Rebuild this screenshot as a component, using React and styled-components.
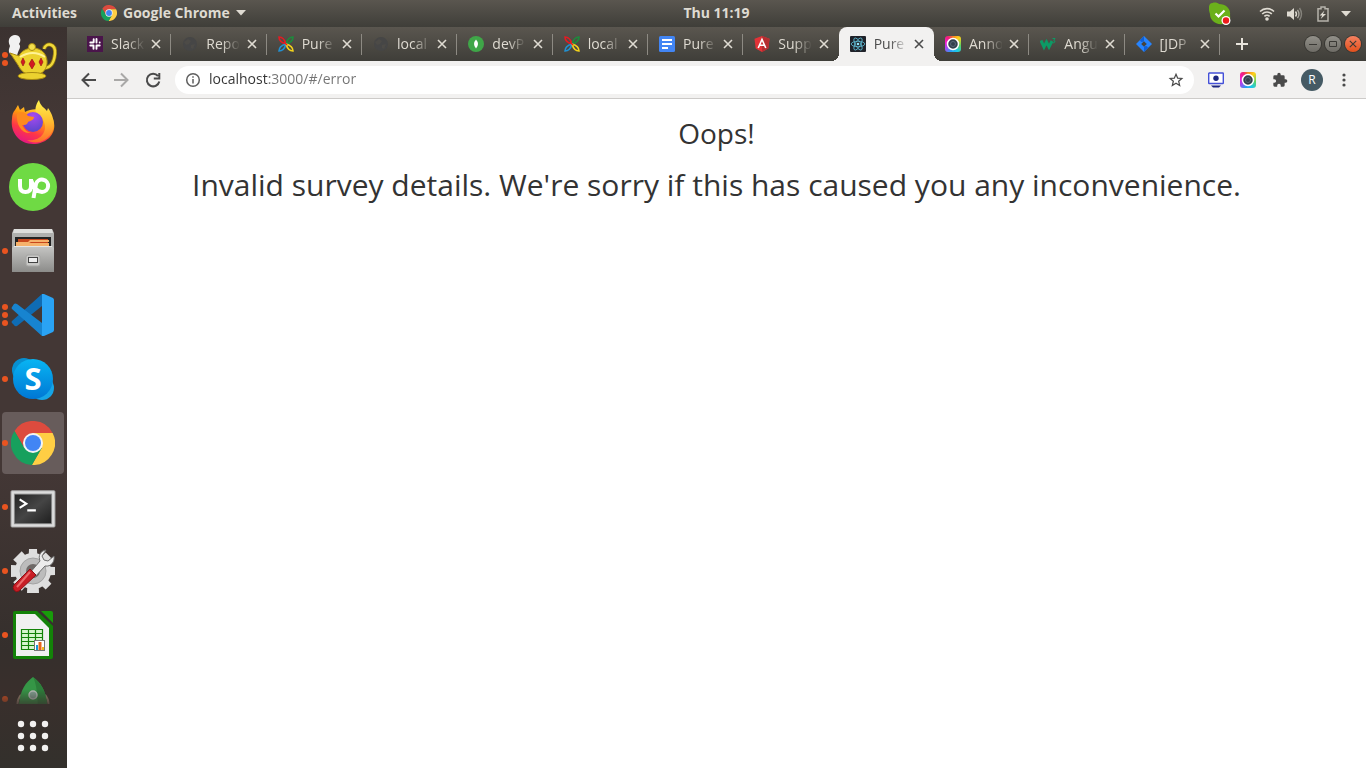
import React from "react";
import styled, { createGlobalStyle } from "styled-components";

const chromeGradient = "linear-gradient(#5a564f, #3f3e39)";

const GlobalStyle = createGlobalStyle`
  * { box-sizing: border-box; }
  body {
    margin: 0;
    background: #fff;
    font-family: "Open Sans", "Noto Sans", sans-serif;
  }
  button {
    border: 0;
    padding: 0;
    background: none;
    font: inherit;
    color: inherit;
  }
  svg { display: block; flex: none; }
`;

/* ---------- layout ---------- */

const Desktop = styled.div`
  display: flex;
  flex-direction: column;
  height: 100vh;
  overflow: hidden;
`;

const TopBar = styled.header`
  display: grid;
  grid-template-columns: 1fr auto 1fr;
  align-items: center;
  height: 27px;
  flex: none;
  background: ${chromeGradient};
  color: #dfdbd2;
  font-size: 14px;
  font-weight: 700;
  line-height: 24px;
`;

const TopLeft = styled.div`
  display: flex;
  align-items: center;
  gap: 24px;
  padding-left: 12px;
`;

const BarButton = styled.button`
  display: flex;
  align-items: center;
  gap: 6px;
  padding-bottom: 2px;
  white-space: nowrap;
`;

const Clock = styled.button`
  padding: 0 0 2px 67px;
`;

const Tray = styled.div`
  display: flex;
  align-items: center;
  justify-content: flex-end;
  gap: 12px;
  padding-right: 15px;
`;

const TrayStatus = styled.div`
  margin-right: 16px;
`;

const Workspace = styled.div`
  display: flex;
  flex: 1;
  min-height: 0;
`;

const Browser = styled.div`
  display: flex;
  flex-direction: column;
  flex: 1;
  min-width: 0;
`;

/* ---------- dock ---------- */

const Dock = styled.nav`
  display: flex;
  flex-direction: column;
  width: 67px;
  flex: none;
  background: linear-gradient(#3b3230, #433735 12%, #433735 60%, #352f2c 84%, #392f2c 90%, #33302c);
`;

const DockSlot = styled.div`
  position: relative;
  display: flex;
  justify-content: center;
  height: 64px;
  flex: none;
  padding: 1px 3px 1px 2px;
  ${(p) => p.$clipped && `
    height: auto;
    flex: 1 1 0;
    min-height: 0;
    overflow: hidden;
    opacity: .85;
    mask-image: linear-gradient(#000 60%, rgba(0, 0, 0, .3));
  `}
`;

const DockButton = styled.button`
  display: flex;
  align-items: center;
  justify-content: center;
  width: 62px;
  height: 62px;
  border-radius: 4px;
  background: ${(p) => (p.$active ? "#675c5b" : "none")};
`;

const Dots = styled.span`
  position: absolute;
  left: 2px;
  top: 0;
  height: 64px;
  display: flex;
  flex-direction: column;
  justify-content: center;
  gap: 2px;
`;

const Dot = styled.i`
  width: 6px;
  height: 6px;
  border-radius: 3px;
  background: #e95420;
`;

/* ---------- tab strip ---------- */

const TabStrip = styled.div`
  display: flex;
  height: 34px;
  flex: none;
  padding-left: 9px;
  background: ${chromeGradient};
`;

const Tabs = styled.div`
  display: flex;
  flex: 1;
  min-width: 0;
`;

const Tab = styled.div`
  position: relative;
  display: flex;
  align-items: center;
  flex: 1 1 0;
  min-width: 0;
  padding: 0 7px 0 11px;
  color: ${(p) => (p.$active ? "#4c4c4c" : "#dfdbd2")};
  ${(p) => p.$active && `
    background: #f2f1f0;
    border-radius: 8px 8px 0 0;
    &::before, &::after {
      content: "";
      position: absolute;
      bottom: 0;
      width: 8px;
      height: 8px;
    }
    &::before {
      right: 100%;
      background: radial-gradient(circle at 0 0, transparent 8px, #f2f1f0 8px);
    }
    &::after {
      left: 100%;
      background: radial-gradient(circle at 100% 0, transparent 8px, #f2f1f0 8px);
    }
  `}
  ${(p) => p.$divider && `
    &::after {
      content: "";
      position: absolute;
      right: 0;
      top: 7px;
      width: 1px;
      height: 21px;
      background: #8d8a83;
    }
  `}
`;

const TabLabel = styled.button`
  display: flex;
  align-items: center;
  gap: 8px;
  flex: 1;
  min-width: 0;
  text-align: left;
`;

const TabTitle = styled.span`
  flex: 1;
  min-width: 0;
  overflow: hidden;
  white-space: nowrap;
  font-size: 14px;
  line-height: 20px;
  mask-image: linear-gradient(90deg, #000 16px, transparent 34px);
`;

const TabClose = styled.button`
  display: grid;
  place-items: center;
  width: 16px;
  height: 16px;
  margin-left: 4px;
  flex: none;
`;

const StripEnd = styled.div`
  display: flex;
  align-items: center;
  justify-content: space-between;
  width: 146px;
  flex: none;
  padding: 0 5px 0 15px;
  color: #e8e4dc;
`;

const WindowControls = styled.div`
  display: flex;
  gap: 4px;
`;

const WindowButton = styled.button`
  display: grid;
  place-items: center;
  width: 16px;
  height: 16px;
  border-radius: 8px;
  color: #3a3935;
  background: ${(p) => (p.$close ? "linear-gradient(#f58160, #e2501c)" : "linear-gradient(#929089, #6e6c66)")};
  box-shadow: 0 0 0 1px #383733;
`;

/* ---------- toolbar ---------- */

const Toolbar = styled.div`
  display: flex;
  align-items: center;
  height: 38px;
  flex: none;
  padding: 0 6px;
  background: #f2f1f0;
  border-bottom: 1px solid #cdcbc9;
  color: #4a4a4a;
`;

const ToolButton = styled.button`
  display: grid;
  place-items: center;
  width: 32px;
  height: 28px;
  flex: none;
  color: ${(p) => (p.$disabled ? "#a9a8a7" : "inherit")};
`;

const Omnibox = styled.label`
  display: flex;
  align-items: center;
  flex: 1;
  min-width: 0;
  height: 28px;
  margin: 0 6px;
  padding: 0 2px 0 10px;
  gap: 8px;
  border-radius: 14px;
  background: #fff;
`;

const Address = styled.input`
  flex: 1;
  min-width: 0;
  height: 28px;
  border: 0;
  padding: 0 0 2px;
  outline: 0;
  font: 14px "Open Sans", "Noto Sans", sans-serif;
  color: transparent;
  caret-color: #333;
  background: linear-gradient(90deg, #333 60px, #737373 60px);
  background-clip: text;
`;

const Avatar = styled.span`
  width: 22px;
  height: 22px;
  border-radius: 11px;
  background: #455a64;
  color: #fff;
  font-size: 12px;
  line-height: 22px;
  text-align: center;
`;

/* ---------- page ---------- */

const Page = styled.main`
  flex: 1;
  padding-top: 13px;
  background: #fff;
  color: #333;
  text-align: center;
`;

const Title = styled.h1`
  margin: 0 0 10px;
  font-size: 28px;
  font-weight: 400;
  line-height: 42px;
`;

const Message = styled.p`
  margin: 0;
  font-size: 30px;
  line-height: 42px;
`;

/* ---------- drawings ---------- */

const ChromeLogo = ({ size }) => (
  <svg width={size} height={size} viewBox="2 2 44 44">
    <path d="M5.5 12A22 22 0 0 1 43.6 14H24l-8.7 15z" fill="#dd4b3e" />
    <path d="M43.6 14A22 22 0 0 1 22.9 46l9.8-17L24 14z" fill="#ffce44" />
    <path d="M22.9 46A22 22 0 0 1 5.5 12l9.8 17h17.4z" fill="#17a05d" />
    <circle cx="24" cy="24" r="10" fill="#f4f4f4" />
    <circle cx="24" cy="24" r="8" fill="#4285f4" />
  </svg>
);

const Caret = () => (
  <svg width="10" height="6" viewBox="0 0 10 6"><path d="M0 0h10L5 5.5z" fill="#dfdbd2" /></svg>
);

const SkypeStatus = () => (
  <svg width="22" height="24" viewBox="0 0 22 24">
    <path d="M1 2C4 0 8 0 10 2c7 0 12 5 11 11 1 6-2 9-7 9-8 1-13-4-13-10C0 9-1 5 1 2z" fill="#6bb01b" />
    <path d="M6.500 11.500l3 3 6-6" fill="none" stroke="#fff" strokeWidth="2.200" />
    <circle cx="17" cy="18.500" r="4.500" fill="#fff" />
    <circle cx="17" cy="18.500" r="3.200" fill="#ee1c1c" />
  </svg>
);

const Wifi = () => (
  <svg width="16" height="16" viewBox="0 0 16 16" fill="none" stroke="#dfdbd2" strokeWidth="1.600">
    <path d="M1 5.500a10 10 0 0 1 14 0M3.200 8a6.800 6.800 0 0 1 9.600 0M5.400 10.400a3.700 3.700 0 0 1 5.200 0" />
    <circle cx="8" cy="13" r="1.800" fill="#dfdbd2" stroke="none" />
  </svg>
);

const Volume = () => (
  <svg width="16" height="16" viewBox="0 0 16 16" fill="none" strokeWidth="1.400">
    <path d="M0 5.500h3L7 2v12l-4-3.500H0z" fill="#dfdbd2" />
    <path d="M8.500 5.500q2 2.500 0 5" stroke="#dfdbd2" />
    <path d="M10.500 3.800q3 4.200 0 8.400" stroke="#aaa79f" />
    <path d="M12.500 2q4 6 0 12" stroke="#85837c" />
  </svg>
);

const Battery = () => (
  <svg width="14" height="16" viewBox="0 0 14 16">
    <path d="M6 1h4v1.700h3V15H3V2.700h3z" fill="none" stroke="#b5b2aa" strokeWidth="1.500" />
    <path d="M9.500 4.500L4.700 9.500h2.500L5.700 13l5.300-5H8z" fill="#dfdbd2" />
  </svg>
);

const TeapotIcon = () => (
  <svg width="52" height="50" viewBox="0 0 52 50">
    <path d="M6 22C0 19 2 15 3 12 0 6 3 1 8 1c5 0 7 5 4 9 3 3-1 6-2 12z" fill="#f1f1f1" />
    <path d="M37 15c2-7 12-6 11 5-1 9-5 14-11 14" fill="none" stroke="#8d7410" strokeWidth="4" />
    <path d="M37 15c2-7 12-6 11 5-1 9-5 14-11 14" fill="none" stroke="#f1d93a" strokeWidth="2.500" />
    <path d="M3 19l9 3c2-5 8-8 14-8 10 0 15 8 14 16-1 7-6 11-14 11S14 37 11 31z" fill="#ecd22f" stroke="#a98b12" />
    <path d="M13 23q13-8 25 0" stroke="#fff396" strokeWidth="2" fill="none" />
    <circle cx="25" cy="13" r="3.500" fill="#f4df4c" stroke="#a98b12" />
    <ellipse cx="25" cy="42" rx="14" ry="3.500" fill="#ecd22f" stroke="#a98b12" />
    <path d="M16 24l2 4-2 4-2-4zM25 25l3 5-3 5-3-5zM34 24l2 4-2 4-2-4z" fill="#d21a22" stroke="#8f1015" strokeWidth=".6" />
  </svg>
);

const FirefoxIcon = () => (
  <svg width="48" height="48" viewBox="0 1 48 48">
    <defs>
      <linearGradient id="ffBody" x1=".8" y1="0" x2=".3" y2="1">
        <stop offset="0" stopColor="#fff44f" /><stop offset=".4" stopColor="#ff980e" />
        <stop offset=".7" stopColor="#ff3647" /><stop offset="1" stopColor="#e31587" />
      </linearGradient>
      <linearGradient id="ffTail" x1="0" y1="0" x2="0" y2="1">
        <stop offset="0" stopColor="#fff44f" /><stop offset=".5" stopColor="#ffbd2f" /><stop offset="1" stopColor="#ff6b2c" />
      </linearGradient>
      <radialGradient id="ffGlobe" cx=".5" cy=".2" r=".9">
        <stop offset="0" stopColor="#a84af0" /><stop offset="1" stopColor="#5245c8" />
      </radialGradient>
    </defs>
    <path d="M6 12l3-5 2 5 4-3 1 5c9-5 22-3 28 7 5 13-5 25-20 25C10 46 1 34 3 21c0-4 1-7 3-9z" fill="url(#ffBody)" />
    <path d="M30 2c1 6 6 8 8 11l1-3c8 11 8 24-2 31-7 5-15 4-19 1 13 2 21-8 17-18-1-4-4-6-7-8-3-4-1-10 2-14z" fill="url(#ffTail)" />
    <circle cx="24" cy="24" r="10" fill="url(#ffGlobe)" />
    <path d="M8 16c5-4 9-1 11 2l6 1c0 3-4 4-6 5-1 3-3 3-6 3 2 4 5 7 9 8C12 36 7 26 8 16z" fill="#ff8a1e" />
  </svg>
);

const UpworkIcon = () => (
  <svg width="48" height="48" viewBox="0 0 48 48" fill="none" stroke="#fff" strokeWidth="4">
    <circle cx="24" cy="24" r="24" fill="#6fda44" stroke="none" />
    <path d="M11 16v7q0 6 5.500 6t5.500-6v-7M22 17c2 6 6 12 11 12a6.200 6.200 0 1 0-6-8L24.500 35" />
  </svg>
);

const FilesIcon = () => (
  <svg width="46" height="48" viewBox="0 0 46 48">
    <defs><linearGradient id="cab" x1="0" y1="0" x2="0" y2="1"><stop offset="0" stopColor="#c6c6c4" /><stop offset="1" stopColor="#8c8c8a" /></linearGradient></defs>
    <path d="M4 2h38l2 4v38H2V6z" fill="#b0b0ae" />
    <path d="M4 2h38l1 4H3z" fill="#dededc" />
    <path d="M5 10h36v10H5z" fill="#232323" />
    <path d="M8 12h30v8H8z" fill="#c8471c" />
    <path d="M6 15h12l2-2h19v2H21l-2 1h20v3H6z" fill="#f6b26b" />
    <path d="M4 19h38l2 2v24H2V21z" fill="url(#cab)" />
    <path d="M4 19.500h38" stroke="#e6e6e4" />
    <rect x="16" y="28" width="14" height="11" rx="2" fill="#c9c9c7" stroke="#a5a5a3" />
    <rect x="18.500" y="30.500" width="9" height="5" fill="#eee" stroke="#444" />
  </svg>
);

const CodeIcon = () => (
  <svg width="48" height="48" viewBox="0 0 48 48">
    <path d="M33 3v12L8 35q-2 1-3-1l-2-2q-1-1 0-2z" fill="#0f6cb4" />
    <path d="M33 45V32L8 13q-2-1-3 0l-2 3q-1 1 0 2z" fill="#1784d0" />
    <path d="M33 3l2 0 9 4q1 1 1 2v30q0 1-1 2l-9 4-2 0z" fill="#2aa3f4" />
  </svg>
);

const SkypeIcon = () => (
  <svg width="48" height="48" viewBox="0 0 48 48">
    <defs><linearGradient id="sky" x1="0" y1="0" x2="0" y2="1"><stop offset="0" stopColor="#08b5f3" /><stop offset="1" stopColor="#0077d4" /></linearGradient></defs>
    <circle cx="15" cy="15" r="12" fill="#078fd0" />
    <circle cx="33" cy="33" r="12" fill="#16a5e6" />
    <circle cx="24" cy="24" r="20" fill="url(#sky)" />
    <text x="24" y="35" textAnchor="middle" fontFamily="Open Sans, sans-serif" fontSize="31" fontWeight="700" fill="#fff">S</text>
  </svg>
);

const TerminalIcon = () => (
  <svg width="46" height="42" viewBox="0 -4 48 44">
    <defs><linearGradient id="term" x1="0" y1="0" x2="1" y2="1"><stop offset="0" stopColor="#242424" /><stop offset=".5" stopColor="#454545" /><stop offset="1" stopColor="#1f1f1f" /></linearGradient></defs>
    <rect x="1" y="1" width="46" height="38" rx="1" fill="#dcdcdc" stroke="#a8a8a8" />
    <rect x="4" y="4" width="40" height="32" fill="#8f8f8f" />
    <rect x="5" y="5" width="38" height="30" fill="url(#term)" />
    <path d="M10 10l7 4.500-7 4.500M18 21.500h9" fill="none" stroke="#fff" strokeWidth="2.200" />
  </svg>
);

const SettingsIcon = () => (
  <svg width="46" height="48" viewBox="0 0 46 48">
    <g fill="#dedede">
      {[0, 45, 90, 135].map((a) => (
        <path key={a} d="M19 2h8l2 44H17z" transform={`rotate(${a} 23 24)`} />
      ))}
      <circle cx="23" cy="24" r="18" />
    </g>
    <circle cx="23" cy="24" r="13" fill="#bcbcbc" stroke="#a3a3a3" />
    <circle cx="23" cy="24" r="7" fill="#6f6a68" />
    <path d="M36 3c-6 1-8 6-6 11L19 27l5 4 11-12c6 1 10-4 9-10l-6 5-4-1-2-4z" fill="#ececec" stroke="#6d6d6d" />
    <path d="M20 22l6 6L9 44q-3 2-5-1-2-2 0-5z" fill="#c81e26" stroke="#8e1015" />
    <path d="M20 25L7 40" stroke="#ec6a6a" strokeWidth="2" />
  </svg>
);

const CalcIcon = () => (
  <svg width="42" height="48" viewBox="0 0 42 48">
    <path d="M3 0h22l16 15v31q0 2-2 2H3q-2 0-2-2V2q0-2 2-2z" fill="#138208" />
    <path d="M29 0h10q2 0 2 2v10z" fill="#189c0a" />
    <path d="M4 3h19l14 14v28H4z" fill="#f0f0f0" />
    <path d="M10 19h20v20H10z" fill="#d6f5cd" />
    <path d="M9.500 18.500h21v20h-21zM9.500 22.500h21M9.500 26.500h21M9.500 30.500h21M9.500 34.500h21M16.500 18.500v20M23.500 18.500v20" fill="none" stroke="#138208" strokeWidth="1.200" />
    <rect x="22.500" y="29.500" width="10" height="10" fill="#fff" stroke="#777" />
    <path d="M24 34h2v5h-2z" fill="#1696d8" /><path d="M26.500 31h3v8h-3z" fill="#e8641b" /><path d="M30 36h2v3h-2z" fill="#f3b71b" />
  </svg>
);

const RocketIcon = () => (
  <svg width="40" height="48" viewBox="0 0 40 48">
    <path d="M8 20Q3 26 5 34M32 20q5 6 3 14" fill="none" stroke="#a58d78" strokeWidth="2" />
    <path d="M20 2c7 5 14 14 14 30v14H6V32C6 16 13 7 20 2z" fill="#35a84b" />
    <path d="M20 2c3 6 5 14 5 44h9V32C34 16 27 7 20 2z" fill="#2a8c3d" />
    <circle cx="20" cy="20" r="4" fill="#8fb4a4" stroke="#cfd8d3" strokeWidth="1.500" />
  </svg>
);

const AppsIcon = () => (
  <svg width="32" height="32" viewBox="0 0 32 32" fill="#f2f1f0">
    {[4, 16, 28].map((y) => [4, 16, 28].map((x) => <circle key={`${x}-${y}`} cx={x} cy={y} r="3.200" />))}
  </svg>
);

const SlackFav = () => (
  <svg width="16" height="16" viewBox="0 0 16 16">
    <rect width="16" height="16" fill="#4a154b" />
    <path d="M6.700 3.300v3M9.500 3v3.500M12.700 6.500h0M3.300 6.500h3M3.300 9.500h3.200M9.500 9.500h3.200M6.500 9.500v3.200M9.500 9.500v3.200M3.500 6.500h0" stroke="#fff" strokeWidth="1.900" strokeLinecap="round" />
  </svg>
);

const GlobeFav = () => (
  <svg width="16" height="16" viewBox="0 0 16 16">
    <circle cx="8" cy="8" r="7" fill="#464646" />
    <path d="M2 6l4-3 3 2-2 3-3 1zM9 9l4-1-2 5-2-1z" fill="#4d4b47" />
  </svg>
);

const PetalFav = () => (
  <svg width="16" height="16" viewBox="0 0 16 16" fill="none" strokeWidth="1.600">
    <path d="M1 1q5 0 7 7Q1 6 1 1z" stroke="#e31b23" />
    <path d="M15 1q-5 0-7 7 7-2 7-7z" stroke="#1c8c3c" />
    <path d="M1 15q5 0 7-7-7 2-7 7z" stroke="#2290d0" />
    <path d="M15 15q-5 0-7-7 7 2 7 7z" stroke="#f3d21b" />
    <path d="M6 6l3 3" stroke="#e31b23" />
  </svg>
);

const MongoFav = () => (
  <svg width="16" height="16" viewBox="0 0 16 16">
    <circle cx="8" cy="8" r="8" fill="#3fa648" />
    <path d="M8 3.500q4 4.500 0 9-4-4.500 0-9z" fill="#fff" />
  </svg>
);

const DocsFav = () => (
  <svg width="16" height="16" viewBox="0 0 16 16">
    <rect width="16" height="16" rx="1.500" fill="#4285f4" />
    <path d="M3 4h10M3 8h10M3 12h6" stroke="#fff" strokeWidth="2" />
  </svg>
);

const AngularFav = () => (
  <svg width="16" height="16" viewBox="0 0 16 16">
    <path d="M8 0l7.500 2.700-1.200 9.800L8 16l-6.300-3.500L.5 2.700z" fill="#e23237" />
    <path d="M8 0l7.500 2.700-1.200 9.800L8 16z" fill="#b52e31" />
    <path d="M4.200 12L8 3.500l3.800 8.500M5.800 9.300h4.400" fill="none" stroke="#fff" strokeWidth="1.600" />
  </svg>
);

const ReactFav = () => (
  <svg width="16" height="16" viewBox="0 0 16 16">
    <rect width="16" height="16" rx="1" fill="#20232a" />
    <g fill="none" stroke="#61bfd8" strokeWidth=".8">
      {[0, 60, 120].map((a) => <ellipse key={a} cx="8" cy="8" rx="6.800" ry="2.700" transform={`rotate(${a} 8 8)`} />)}
    </g>
    <circle cx="8" cy="8" r="1.300" fill="#8fe3f7" />
  </svg>
);

const Rainbow = styled.span`
  display: grid;
  place-items: center;
  width: 16px;
  height: 16px;
  flex: none;
  border-radius: 3px;
  background: conic-gradient(#f58220, #ffd21a 12%, #5fd35f 28%, #1cc8ea 42%, #2a9df4 55%, #a24bf0 66%, #f01bd0 78%, #f0207a 90%, #f58220);
`;

const CameraFav = () => (
  <Rainbow>
    <svg width="14" height="14" viewBox="0 0 14 14">
      <circle cx="7" cy="7" r="5.500" fill="#33404c" stroke="#fff" strokeWidth="1.500" />
      <circle cx="7" cy="7" r="2.500" fill="none" stroke="#596876" />
    </svg>
  </Rainbow>
);

const SchoolsFav = () => (
  <svg width="16" height="16" viewBox="0 0 16 16" fill="none" stroke="#0c9a65">
    <path d="M1 4.500l3 6.500 2.500-5L9 11l3-6" strokeWidth="3" />
    <path d="M12.500 2.500h2.500L13.700 4.400q1.800.3 1 1.800-.8 1-2.200.3" strokeWidth="1" />
  </svg>
);

const JiraFav = () => (
  <svg width="16" height="16" viewBox="0 0 16 16">
    <path d="M8 0l8 8-8 8-8-8z" fill="#2684ff" />
    <path d="M8 5.200v-5L4 4.300q1 2.700 4 .9zM8 10.800v5l4-4.100q-1-2.700-4-.9z" fill="#0e5fd8" />
    <path d="M8 5.200L10.800 8 8 10.800 5.200 8z" fill="#46433e" />
  </svg>
);

const Cross = ({ size = 10, width = 1.6 }) => (
  <svg width={size} height={size} viewBox="0 0 10 10"><path d="M1 1l8 8M9 1L1 9" stroke="currentColor" strokeWidth={width} /></svg>
);

const Stroke = ({ d, width = 2, size = 18 }) => (
  <svg width={size} height={size} viewBox="0 0 18 18" fill="none" stroke="currentColor" strokeWidth={width}>
    <path d={d} />
  </svg>
);

const CaptureIcon = () => (
  <svg width="16" height="16" viewBox="0 0 16 16">
    <rect x=".7" y="1" width="14.600" height="10.500" rx=".5" fill="#fff" stroke="#4450d8" strokeWidth="1.400" />
    <circle cx="8" cy="6.300" r="2.700" fill="#1b2480" />
    <path d="M3 13.500h10l-2 2H5z" fill="#1b2480" />
  </svg>
);

const PuzzleIcon = () => (
  <svg width="16" height="16" viewBox="0 0 24 24" fill="#4a4a4a">
    <path d="M20.500 11H19V7a2 2 0 0 0-2-2h-4V3.500a2.500 2.500 0 0 0-5 0V5H4a2 2 0 0 0-2 2v3.800h1.500a2.700 2.700 0 0 1 0 5.400H2V20a2 2 0 0 0 2 2h3.800v-1.500a2.700 2.700 0 0 1 5.400 0V22H17a2 2 0 0 0 2-2v-4h1.500a2.500 2.500 0 0 0 0-5z" />
  </svg>
);

const MenuIcon = () => (
  <svg width="4" height="14" viewBox="0 0 4 14" fill="#4a4a4a">
    <circle cx="2" cy="2" r="1.600" /><circle cx="2" cy="7" r="1.600" /><circle cx="2" cy="12" r="1.600" />
  </svg>
);

/* ---------- data ---------- */

const dockApps = [
  { name: "Teapot", icon: <TeapotIcon />, windows: 2 },
  { name: "Firefox", icon: <FirefoxIcon />, windows: 0 },
  { name: "Upwork", icon: <UpworkIcon />, windows: 0 },
  { name: "Files", icon: <FilesIcon />, windows: 1 },
  { name: "Code", icon: <CodeIcon />, windows: 3 },
  { name: "Skype", icon: <SkypeIcon />, windows: 1 },
  { name: "Google Chrome", icon: <ChromeLogo size={44} />, windows: 1, active: true },
  { name: "Terminal", icon: <TerminalIcon />, windows: 1 },
  { name: "Settings", icon: <SettingsIcon />, windows: 1 },
  { name: "Calc", icon: <CalcIcon />, windows: 1 },
  { name: "Rocket", icon: <RocketIcon />, windows: 1, clipped: true },
];

const tabs = [
  { title: "Slack", icon: <SlackFav /> },
  { title: "Repo", icon: <GlobeFav /> },
  { title: "Pure", icon: <PetalFav /> },
  { title: "local", icon: <GlobeFav /> },
  { title: "devP", icon: <MongoFav /> },
  { title: "local", icon: <PetalFav /> },
  { title: "Pure", icon: <DocsFav /> },
  { title: "Supp", icon: <AngularFav /> },
  { title: "Pure", icon: <ReactFav />, active: true },
  { title: "Anno", icon: <CameraFav /> },
  { title: "Angu", icon: <SchoolsFav /> },
  { title: "[JDP", icon: <JiraFav /> },
];

export default function App() {
  return (
    <Desktop>
      <GlobalStyle />
      <TopBar>
        <TopLeft>
          <BarButton>Activities</BarButton>
          <BarButton><ChromeLogo size={16} />Google Chrome<Caret /></BarButton>
        </TopLeft>
        <Clock>Thu 11:19</Clock>
        <Tray>
          <TrayStatus><SkypeStatus /></TrayStatus>
          <Wifi /><Volume /><Battery /><Caret />
        </Tray>
      </TopBar>
      <Workspace>
        <Dock>
          {dockApps.map((app) => (
            <DockSlot key={app.name} $clipped={app.clipped}>
              <Dots>{Array.from({ length: app.windows }, (_, i) => <Dot key={i} />)}</Dots>
              <DockButton $active={app.active} aria-label={app.name}>{app.icon}</DockButton>
            </DockSlot>
          ))}
          <DockSlot>
            <DockButton aria-label="Show applications"><AppsIcon /></DockButton>
          </DockSlot>
        </Dock>
        <Browser>
          <TabStrip>
            <Tabs>
              {tabs.map((tab, i) => (
                <Tab key={i} $active={tab.active} $divider={!tab.active && !tabs[i + 1]?.active}>
                  <TabLabel>{tab.icon}<TabTitle>{tab.title}</TabTitle></TabLabel>
                  <TabClose aria-label="Close tab"><Cross /></TabClose>
                </Tab>
              ))}
            </Tabs>
            <StripEnd>
              <button aria-label="New tab">
                <svg width="14" height="14" viewBox="0 0 14 14"><path d="M7 1v12M1 7h12" stroke="currentColor" strokeWidth="2" /></svg>
              </button>
              <WindowControls>
                <WindowButton aria-label="Minimize"><svg width="10" height="10"><path d="M1 5.500h8" stroke="currentColor" /></svg></WindowButton>
                <WindowButton aria-label="Maximize"><svg width="10" height="10"><path d="M1.500 2.500h7v5h-7z" fill="none" stroke="currentColor" /></svg></WindowButton>
                <WindowButton $close aria-label="Close"><Cross size={8} width={1.4} /></WindowButton>
              </WindowControls>
            </StripEnd>
          </TabStrip>
          <Toolbar>
            <ToolButton aria-label="Back"><Stroke d="M16 9H3M9 2.500L2.500 9 9 15.500" /></ToolButton>
            <ToolButton $disabled aria-label="Forward"><Stroke d="M2 9h13M9 2.500L15.500 9 9 15.500" /></ToolButton>
            <ToolButton aria-label="Reload"><Stroke d="M14 5a6.300 6.300 0 1 0 1.300 5.500M15.300 2v5.500H9.800" /></ToolButton>
            <Omnibox>
              <svg width="16" height="16" viewBox="0 0 16 16" fill="none" stroke="#5f5f5f" strokeWidth="1.500">
                <circle cx="8" cy="8" r="6.300" /><path d="M8 7v4.500M8 4.200v1.600" />
              </svg>
              <Address aria-label="Address" defaultValue="localhost:3000/#/error" spellCheck={false} />
              <ToolButton aria-label="Bookmark this page">
                <Stroke size={16} width={1.4} d="M9 2.500l1.900 4.400 4.700.4-3.600 3.100 1.100 4.700L9 12.600l-4.100 2.500L6 10.400 2.400 7.300l4.700-.4z" />
              </ToolButton>
            </Omnibox>
            <ToolButton aria-label="Screen capture"><CaptureIcon /></ToolButton>
            <ToolButton aria-label="Screenshot"><CameraFav /></ToolButton>
            <ToolButton aria-label="Extensions"><PuzzleIcon /></ToolButton>
            <ToolButton aria-label="Profile"><Avatar>R</Avatar></ToolButton>
            <ToolButton aria-label="Menu"><MenuIcon /></ToolButton>
          </Toolbar>
          <Page>
            <Title>Oops!</Title>
            <Message>Invalid survey details. We're sorry if this has caused you any inconvenience.</Message>
          </Page>
        </Browser>
      </Workspace>
    </Desktop>
  );
}
